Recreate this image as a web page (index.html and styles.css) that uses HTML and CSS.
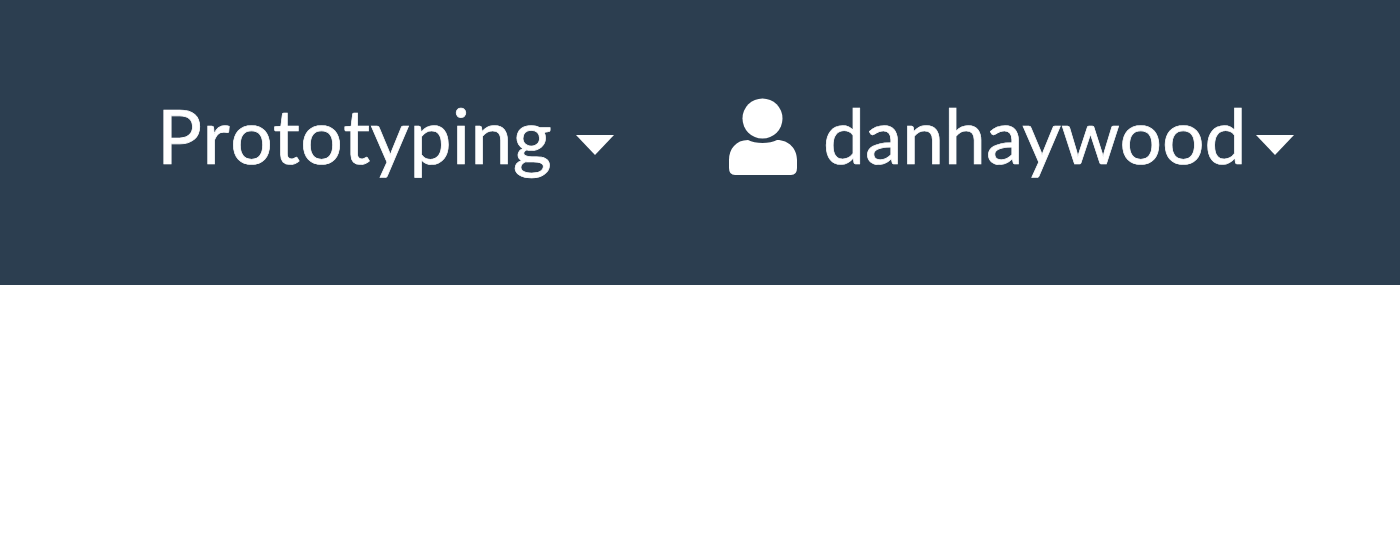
FILE: index.html
```html
<!DOCTYPE html>
<html lang="en">
<head>
<meta charset="utf-8">
<title>Menu</title>
<link rel="stylesheet" href="styles.css">
</head>
<body>
<nav class="navbar">
  <a class="item"><span class="label proto">Prototyping</span><svg class="caret" viewBox="0 0 38 20"><path d="M0 0H38L19 20Z"/></svg></a>
  <a class="item user"><svg class="person" viewBox="0 0 70 77"><circle cx="34.5" cy="20.500" r="20"/><path d="M20 42C27 46 42 46 49 42C61 42 69 51 69 62V70Q69 77 63 77H7Q1 77 1 70V62C1 51 8 42 20 42Z"/></svg><span class="label name">danhaywood</span><svg class="caret" viewBox="0 0 38 20"><path d="M0 0H38L19 20Z"/></svg></a>
</nav>
</body>
</html>
```
FILE: styles.css
```css
body {
  margin: 0;
  background: #fff;
}
.navbar {
  display: flex;
  height: 285px;
  box-sizing: border-box;
  padding: 98px 0 0 157px;
  background: #2c3e50;
  color: #fff;
}
.item {
  display: flex;
  align-items: flex-start;
}
.user {
  margin-left: 114px;
}
.label {
  font: 75px/74px Lato, sans-serif;
  white-space: nowrap;
  -webkit-text-stroke: 0.7px #fff;
}
.proto {
  width: 419px;
  font-kerning: none;
  letter-spacing: 0.4px;
}
.name {
  width: 433px;
  margin-left: 25px;
}
.person {
  width: 70px;
  height: 77px;
  fill: #fff;
}
.caret {
  width: 38px;
  height: 20px;
  margin-top: 37px;
  fill: #fff;
}
```
